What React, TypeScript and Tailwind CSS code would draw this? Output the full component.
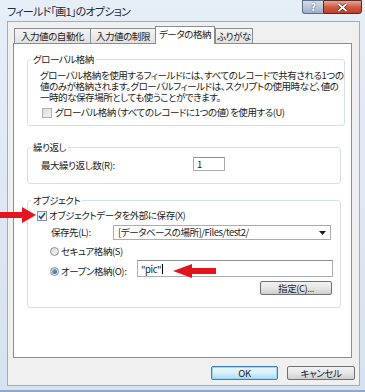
import React from "react";

const font = "font-['Noto_Sans_CJK_JP','Noto_Sans',sans-serif] [font-feature-settings:'palt']";

function Tab({ label, w, active }: { label: string; w: string; active?: boolean }) {
  if (active) {
    return (
      <div
        className={`relative z-10 -mb-px flex h-[18px] ${w} items-start justify-center whitespace-nowrap border border-b-0 border-[#898c95] bg-white pt-[2px]`}
      >
        {label}
      </div>
    );
  }
  return (
    <div
      className={`flex h-[15px] ${w} items-center justify-center whitespace-nowrap border border-b-0 border-r-0 border-[#898c95] bg-gradient-to-b from-[#f4f4f4] to-[#e1e1e1] last:border-r`}
    >
      {label}
    </div>
  );
}

function Group({ title, className, children }: { title: string; className?: string; children: React.ReactNode }) {
  return (
    <fieldset className={`rounded-[3px] border border-[#d5dfe5] ${className ?? ""}`}>
      <legend className="ml-[3px] px-[2px] leading-[11px]">{title}</legend>
      {children}
    </fieldset>
  );
}

function Radio({ on }: { on?: boolean }) {
  return (
    <span className="flex h-[9px] w-[9px] shrink-0 items-center justify-center rounded-full border border-[#8e8f8f] bg-gradient-to-br from-[#d8d8d8] to-[#f6f6f6]">
      {on && <span className="h-[5px] w-[5px] rounded-full bg-gradient-to-br from-[#7bc4f0] to-[#1d5f8f]" />}
    </span>
  );
}

export default function App() {
  return (
    <div
      className={`relative flex h-[392px] w-[365px] flex-col overflow-hidden border-b-2 border-[#8fa8c8] bg-gradient-to-b from-[#e6eef7] to-[#d6e2ef] text-[9.5px] leading-[11px] tracking-[-0.45px] text-[#1b1b1b] ${font}`}
    >
      {/* title bar */}
      <div className="flex h-[21px] shrink-0 items-start">
        <span className="ml-[7px] mt-[5px] text-[11px] leading-[12px] tracking-[-0.75px] text-[#1e2a3a]">
          フィールド「画1」のオプション
        </span>
        <div className="ml-auto mr-[3px] flex">
          <div className="flex h-[14px] w-[21px] items-center justify-center rounded-bl-[3px] border border-r-0 border-[#5c6f88] bg-gradient-to-b from-[#d3dde9] to-[#9fb1c6] text-[10px] font-bold leading-none text-white [text-shadow:0_0_2px_#44556a]">
            ?
          </div>
          <div className="flex h-[14px] w-[39px] items-center justify-center rounded-br-[3px] border border-[#5a2a22] bg-gradient-to-b from-[#e6a595] via-[#cf5a47] to-[#c2402c]">
            <svg width="11" height="9" viewBox="0 0 11 9">
              <path d="M1.5 1 L9.5 8 M9.5 1 L1.5 8" stroke="#5b1d12" strokeWidth="3" />
              <path d="M1.5 1 L9.5 8 M9.5 1 L1.5 8" stroke="#ffffff" strokeWidth="1.8" />
            </svg>
          </div>
        </div>
      </div>

      {/* client area */}
      <div className="mb-[4px] ml-[7px] mr-[5px] flex flex-1 flex-col border border-[#9daec4] bg-[#f0f0f0]">
        <div className="ml-[6px] mt-[4px] flex h-[17px] items-end">
          <Tab label="入力値の自動化" w="w-[76px]" />
          <Tab label="入力値の制限" w="w-[65px]" />
          <Tab label="データの格納" w="w-[60px]" active />
          <Tab label="ふりがな" w="w-[38px]" />
        </div>

        <div className="ml-[5px] mr-[7px] flex flex-1 flex-col border border-[#898c95] bg-white pl-[13px] pr-[10px] pt-[10px]">
          <Group title="グローバル格納">
            <div className="pb-[7px] pl-[12px] pt-[5px]">
              <div className="whitespace-nowrap">
                グローバル格納を使用するフィールドには、すべてのレコードで共有される1つの
                <br />
                値のみが格納されます。グローバルフィールドは、スクリプトの使用時など、値の
                <br />
                一時的な保存場所としても使うことができます。
              </div>
              <div className="ml-[2px] mt-[4px] flex items-center gap-[3px] whitespace-nowrap">
                <span className="h-[10px] w-[10px] border border-[#b1b1b1] bg-gradient-to-br from-[#dcdcdc] to-[#f4f4f4]" />
                <span>グローバル格納（すべてのレコードに1つの値）を使用する(U)</span>
              </div>
            </div>
          </Group>

          <Group title="繰り返し" className="mt-[16px]">
            <div className="flex items-center pb-[12px] pl-[13px] pt-[4px]">
              <span className="w-[152px] whitespace-nowrap pt-[2px]">最大繰り返し数(R):</span>
              <div className="flex h-[14px] w-[32px] items-center border border-[#abadb3] border-t-[#8e8f8f] bg-white pl-[3px]">
                1
              </div>
            </div>
          </Group>

          <Group title="オブジェクト" className="mt-[11px]">
            <div className="flex flex-col pb-[12px] pl-[9px] pt-[4px]">
              <div className="flex items-center gap-[2px] whitespace-nowrap">
                <span className="flex h-[10px] w-[10px] items-center justify-center border border-[#8f8f8f] bg-gradient-to-br from-[#e9e9e9] to-white">
                  <svg width="8" height="8" viewBox="0 0 8 8">
                    <path d="M1 4 L3 6.5 L7 1" fill="none" stroke="#2a4a8c" strokeWidth="1.6" />
                  </svg>
                </span>
                <span>オブジェクトデータを外部に保存(X)</span>
              </div>

              <div className="mt-[4px] flex items-center">
                <span className="ml-[14px] w-[62px] whitespace-nowrap">保存先(L):</span>
                <div className="flex h-[15px] w-[218px] items-center justify-between border border-[#abadb3] bg-white pl-[4px] pr-[4px]">
                  <span className="whitespace-nowrap">[データベースの場所]/Files/test2/</span>
                  <svg width="7" height="4" viewBox="0 0 7 4">
                    <path d="M0 0 H7 L3.5 4 Z" fill="#1b1b1b" />
                  </svg>
                </div>
              </div>

              <div className="ml-[13px] mt-[6px] flex items-center gap-[2px] whitespace-nowrap">
                <Radio />
                <span>セキュア格納(S)</span>
              </div>

              <div className="mt-[3px] flex items-end">
                <div className="ml-[13px] flex w-[87px] items-center gap-[2px] whitespace-nowrap">
                  <Radio on />
                  <span>オープン格納(O):</span>
                </div>
                <div className="flex h-[17px] w-[196px] items-end border border-[#abadb3] border-t-[#8e8f8f] bg-white pb-[1px] pl-[3px]">
                  <span>"pic"</span>
                  <span className="mb-[1px] ml-[1px] h-[10px] w-px bg-black" />
                </div>
              </div>

              <div className="mr-[8px] mt-[4px] flex justify-end">
                <div className="flex h-[14px] w-[72px] items-center justify-center rounded-[2px] border border-[#707070] bg-gradient-to-b from-[#f2f2f2] via-[#e6e6e6] to-[#cfcfcf]">
                  指定(C)...
                </div>
              </div>
            </div>
          </Group>
        </div>

        <div className="mb-[5px] mr-[4px] mt-[8px] flex h-[14px] justify-end gap-[9px]">
          <div className="flex w-[67px] items-center justify-center rounded-[2px] border border-[#3c7fb1] bg-gradient-to-b from-[#eaf6fd] via-[#d9f0fc] to-[#a7d9f5] shadow-[inset_0_0_0_1px_#9ad6f6]">
            OK
          </div>
          <div className="flex w-[68px] items-center justify-center rounded-[2px] border border-[#707070] bg-gradient-to-b from-[#f2f2f2] via-[#e6e6e6] to-[#cfcfcf]">
            キャンセル
          </div>
        </div>
      </div>

      {/* annotation arrows */}
      <svg className="absolute left-0 top-[207px]" width="37" height="16" viewBox="0 0 37 16">
        <polygon points="0,5 22,5 22,0 36,8 22,16 22,11 0,11" fill="#e3141b" />
      </svg>
      <svg className="absolute left-[173px] top-[264px]" width="43" height="14" viewBox="0 0 43 14">
        <polygon points="0,7 19,0 19,4 43,4 43,10 19,10 19,14" fill="#e3141b" />
      </svg>
    </div>
  );
}
